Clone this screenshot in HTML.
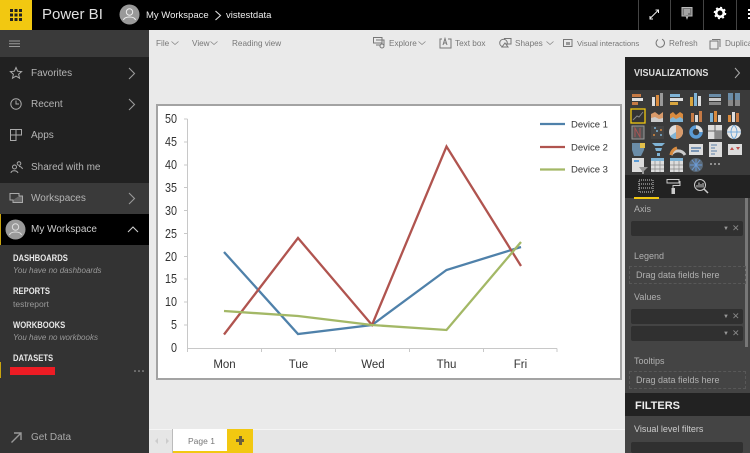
<!DOCTYPE html>
<html><head><meta charset="utf-8"><style>
*{box-sizing:border-box}
html,body{margin:0;padding:0}
html{background:#eaeaea}
body{width:750px;height:453px;position:relative;overflow:hidden;background:#eaeaea;font-family:"Liberation Sans",sans-serif;filter:blur(.3px)}
.a{position:absolute;white-space:nowrap}
.nav{font-size:10px;color:#b4b4b4;left:31px}
.h{font-size:9px;font-weight:bold;color:#e8e8e8;left:13px;transform:scaleX(.85);transform-origin:left}
.s{font-size:8.5px;color:#999;left:13px}
.i{font-size:8px;font-style:italic}
.t{font-size:8.2px;color:#777}
.f{font-size:9px;color:#b0b0b0}
.w{position:absolute;left:631px;width:112px;height:15px;background:#303030;border-radius:2px}
.d{position:absolute;left:629px;width:117px;height:18px;border:1px dashed #585858}
.sep{position:absolute;top:0;width:1px;height:30px;background:#444}
</style></head><body>
<!-- top bar -->
<div class="a" style="left:0;top:0;width:750px;height:30px;background:#000"></div>
<div class="a" style="left:0;top:0;width:32px;height:30px;background:#f2c811"></div>
<svg class="a" style="left:9px;top:8px" width="14" height="14"><g fill="#222"><rect x="1" y="1" width="3" height="3"/><rect x="5.500" y="1" width="3" height="3"/><rect x="10" y="1" width="3" height="3"/><rect x="1" y="5.500" width="3" height="3"/><rect x="5.500" y="5.500" width="3" height="3"/><rect x="10" y="5.500" width="3" height="3"/><rect x="1" y="10" width="3" height="3"/><rect x="5.500" y="10" width="3" height="3"/><rect x="10" y="10" width="3" height="3"/></g></svg>
<div class="a" style="left:42px;top:6px;font-size:15px;color:#e0e0e0">Power BI</div>
<svg class="a" style="left:119px;top:4px" width="21" height="21"><circle cx="10.500" cy="10.500" r="10" fill="#999"/><circle cx="10.500" cy="8" r="3.200" fill="none" stroke="#eee"/><path d="M4.500 16c1-4 11-4 12 0" fill="none" stroke="#eee"/></svg>
<div class="a" style="left:146px;top:10px;font-size:9.5px;color:#eee">My Workspace</div>
<svg class="a" style="left:214px;top:10px" width="8" height="11"><path d="M1.500 1l5 4.500-5 4.500" fill="none" stroke="#ddd" stroke-width="1.100"/></svg>
<div class="a" style="left:226px;top:10px;font-size:9.5px;color:#eee">vistestdata</div>
<div class="sep" style="left:638px"></div><div class="sep" style="left:670px"></div><div class="sep" style="left:703px"></div><div class="sep" style="left:736px"></div>
<svg class="a" style="left:648px;top:8px" width="12" height="12"><path d="M2 10.500L10 2.500M7.500 2H10.500V5M2 8V11H5" fill="none" stroke="#eee" stroke-width="1"/></svg>
<svg class="a" style="left:680px;top:6px" width="14" height="14"><path d="M2 1.500H12V10H8L7 12.500 6 10H2Z" fill="#777" stroke="#bbb"/><path d="M4 4H10M4 6H10M4 8H8" stroke="#eee" stroke-width=".8"/></svg>
<svg class="a" style="left:713px;top:6px" width="14" height="14"><circle cx="7" cy="7" r="3.800" fill="none" stroke="#fff" stroke-width="2.600"/><circle cx="7" cy="7" r="5.500" fill="none" stroke="#fff" stroke-width="1.600" stroke-dasharray="2 2.300"/></svg>
<div class="a" style="left:748px;top:9px;width:2px;height:10px;border-left:2px dotted #fff"></div>

<!-- sidebar -->
<div class="a" style="left:0;top:30px;width:149px;height:423px;background:#333"></div>
<div class="a" style="left:0;top:30px;width:149px;height:27px;background:#3a3a3a"></div>
<div class="a" style="left:0;top:57px;width:149px;height:126px;background:#212121"></div>
<div class="a" style="left:0;top:183px;width:149px;height:31px;background:#3a3a3a"></div>
<div class="a" style="left:0;top:214px;width:149px;height:31px;background:#000;border-left:1px solid #c9a50f"></div>
<div class="a" style="left:0;top:362px;width:1px;height:16px;background:#c9a50f"></div>
<svg class="a" style="left:9px;top:40px" width="12" height="8"><path d="M0 1H11M0 3.800H11M0 6.500H11" stroke="#999"/></svg>
<svg class="a" style="left:9px;top:66px" width="14" height="14"><path d="M7 1.500l1.600 3.700 4 .4-3 2.600.9 4-3.500-2.100-3.500 2.100.9-4-3-2.600 4-.4z" fill="none" stroke="#aaa"/></svg>
<div class="a nav" style="top:68px">Favorites</div>
<svg class="a" style="left:128px;top:67px" width="8" height="13"><path d="M1 1l5.500 5.500L1 12" fill="none" stroke="#999" stroke-width="1.100"/></svg>
<svg class="a" style="left:9px;top:97px" width="14" height="14"><circle cx="7" cy="7" r="5.200" fill="none" stroke="#aaa"/><path d="M7 3.500V7H10" fill="none" stroke="#aaa"/></svg>
<div class="a nav" style="top:99px">Recent</div>
<svg class="a" style="left:128px;top:98px" width="8" height="13"><path d="M1 1l5.500 5.500L1 12" fill="none" stroke="#999" stroke-width="1.100"/></svg>
<svg class="a" style="left:9px;top:128px" width="14" height="14"><path d="M1.500 1.500H7V7H1.500ZM7 1.500H12.500V7H7M1.500 7V12.500H7V7" fill="none" stroke="#aaa"/></svg>
<div class="a nav" style="top:130px">Apps</div>
<svg class="a" style="left:9px;top:160px" width="15" height="14"><circle cx="5.500" cy="7" r="2" fill="none" stroke="#aaa"/><path d="M2 13c0-3 6-3 7 0" fill="none" stroke="#aaa"/><circle cx="10" cy="3.500" r="1.800" fill="none" stroke="#aaa"/><path d="M10 6.500c2 0 3 1 3.500 2.500" fill="none" stroke="#aaa"/></svg>
<div class="a nav" style="top:162px">Shared with me</div>
<svg class="a" style="left:9px;top:191px" width="15" height="14"><path d="M1 2.500H10V9H1Z" fill="none" stroke="#aaa"/><path d="M4 9V11.500H13.500V5H10" fill="#666" stroke="#aaa"/></svg>
<div class="a nav" style="top:193px">Workspaces</div>
<svg class="a" style="left:128px;top:192px" width="8" height="13"><path d="M1 1l5.500 5.500L1 12" fill="none" stroke="#999" stroke-width="1.100"/></svg>
<svg class="a" style="left:5px;top:219px" width="21" height="21"><circle cx="10.500" cy="10.500" r="10" fill="#999"/><circle cx="10.500" cy="8" r="3.200" fill="none" stroke="#ddd"/><path d="M4.500 16c1-4 11-4 12 0" fill="none" stroke="#ddd"/></svg>
<div class="a nav" style="top:224px;color:#ccc">My Workspace</div>
<svg class="a" style="left:127px;top:225px" width="12" height="8"><path d="M1 7l5-5 5 5" fill="none" stroke="#ccc" stroke-width="1.100"/></svg>
<div class="a h" style="top:253px">DASHBOARDS</div>
<div class="a s i" style="top:266px">You have no dashboards</div>
<div class="a h" style="top:286px">REPORTS</div>
<div class="a s" style="top:299px">testreport</div>
<div class="a h" style="top:320px">WORKBOOKS</div>
<div class="a s i" style="top:333px">You have no workbooks</div>
<div class="a h" style="top:353px">DATASETS</div>
<div class="a" style="left:10px;top:367px;width:45px;height:8px;background:#ed1c24"></div>
<svg class="a" style="left:133px;top:369px" width="12" height="4"><g fill="#aaa"><circle cx="2" cy="2" r=".8"/><circle cx="6" cy="2" r=".8"/><circle cx="10" cy="2" r=".8"/></g></svg>
<svg class="a" style="left:10px;top:431px" width="13" height="13"><path d="M1.500 11.500L11 2M4 2H11V9" fill="none" stroke="#999" stroke-width="1.400"/></svg>
<div class="a nav" style="top:432px;color:#a8a8a8">Get Data</div>

<!-- toolbar -->
<div class="a t" style="left:156px;top:39px">File</div>
<svg class="a" style="left:171px;top:41px" width="8" height="5"><path d="M.5 .5l3.500 3 3.500-3" fill="none" stroke="#888" stroke-width=".8"/></svg>
<div class="a t" style="left:192px;top:39px">View</div>
<svg class="a" style="left:210px;top:41px" width="8" height="5"><path d="M.5 .5l3.500 3 3.500-3" fill="none" stroke="#888" stroke-width=".8"/></svg>
<div class="a t" style="left:232px;top:39px">Reading view</div>
<svg class="a" style="left:373px;top:37px" width="13" height="12"><path d="M.5 .5H9V6H.5ZM3 3H11V8H3" fill="none" stroke="#777"/><circle cx="9" cy="9" r="2" fill="#eaeaea" stroke="#777"/></svg>
<div class="a t" style="left:389px;top:39px">Explore</div>
<svg class="a" style="left:418px;top:41px" width="8" height="5"><path d="M.5 .5l3.500 3 3.500-3" fill="none" stroke="#888" stroke-width=".8"/></svg>
<svg class="a" style="left:439px;top:37px" width="13" height="12"><path d="M3 2H1V11H12V2H9" fill="none" stroke="#777"/><path d="M4 8L6 1.500 8 8M4.800 6H7.200" fill="none" stroke="#777"/></svg>
<div class="a t" style="left:455px;top:39px">Text box</div>
<svg class="a" style="left:499px;top:37px" width="13" height="12"><circle cx="4.500" cy="6" r="3.800" fill="none" stroke="#777"/><path d="M5 1.500H12V7H7" fill="none" stroke="#777"/><path d="M6 6l3 4H3z" fill="#eaeaea" stroke="#777"/></svg>
<div class="a t" style="left:515px;top:39px">Shapes</div>
<svg class="a" style="left:546px;top:41px" width="8" height="5"><path d="M.5 .5l3.500 3 3.500-3" fill="none" stroke="#888" stroke-width=".8"/></svg>
<svg class="a" style="left:563px;top:38px" width="10" height="10"><path d="M.5 1.500H9V8.500H.5Z" fill="none" stroke="#777"/><path d="M3 4H7V7H3Z" fill="#999"/></svg>
<div class="a t" style="left:577px;top:39px;font-size:7.700px">Visual interactions</div>
<svg class="a" style="left:655px;top:37px" width="11" height="12"><path d="M3 2.500A4.200 4.200 0 1 0 7 2.200" fill="none" stroke="#777"/></svg>
<div class="a t" style="left:669px;top:39px">Refresh</div>
<svg class="a" style="left:709px;top:37px" width="13" height="13"><path d="M3 2.500H11V10" fill="none" stroke="#777"/><path d="M1 4H9V12H1Z" fill="none" stroke="#777"/></svg>
<div class="a t" style="left:725px;top:39px">Duplicate</div>

<!-- canvas -->
<div class="a" style="left:156px;top:104px;width:466px;height:276px;background:#fff;border:2px solid #a3a3a3"></div>
<svg class="a" style="left:156px;top:104px" width="466" height="276" viewBox="156 104 466 276">
<g stroke="#c8c8c8" fill="none"><path d="M187.500 119V348.500H557M184 119H187.500M184 142H187.500M184 165H187.500M184 187.500H187.500M184 210.500H187.500M184 233.500H187.500M184 256.500H187.500M184 279H187.500M184 302H187.500M184 325H187.500M261.500 348.500V352M335.500 348.500V352M409.500 348.500V352M483.500 348.500V352M557 348.500V352M187.500 348.500V352"/></g>
<g font-family="Liberation Sans" font-size="12.500" fill="#333">
<text x="165" y="123" textLength="12" lengthAdjust="spacingAndGlyphs">50</text><text x="165" y="146" textLength="12" lengthAdjust="spacingAndGlyphs">45</text><text x="165" y="169" textLength="12" lengthAdjust="spacingAndGlyphs">40</text><text x="165" y="192" textLength="12" lengthAdjust="spacingAndGlyphs">35</text><text x="165" y="215" textLength="12" lengthAdjust="spacingAndGlyphs">30</text><text x="165" y="238" textLength="12" lengthAdjust="spacingAndGlyphs">25</text><text x="165" y="261" textLength="12" lengthAdjust="spacingAndGlyphs">20</text><text x="165" y="283" textLength="12" lengthAdjust="spacingAndGlyphs">15</text><text x="165" y="306" textLength="12" lengthAdjust="spacingAndGlyphs">10</text><text x="171" y="329" textLength="6" lengthAdjust="spacingAndGlyphs">5</text><text x="171" y="352" textLength="6" lengthAdjust="spacingAndGlyphs">0</text></g>
<g font-family="Liberation Sans" font-size="11.500" fill="#333" text-anchor="middle">
<text x="224.500" y="368">Mon</text><text x="298.500" y="368">Tue</text><text x="373" y="368">Wed</text><text x="446.500" y="368">Thu</text><text x="520.500" y="368">Fri</text></g>
<g fill="none" stroke-width="2.300">
<path d="M224 252L298 334 372 325 446.500 270 521 247" stroke="#4f81aa"/>
<path d="M224 334.500L298 238 372 325 446.500 146.500 521 266" stroke="#b0544f"/>
<path d="M224 311L298 316 372 325 446.500 330 521 242" stroke="#a3b866"/>
<path d="M540 124H565" stroke="#4f81aa"/><path d="M540 147H565" stroke="#b0544f"/><path d="M540 169.500H565" stroke="#a3b866"/></g>
<g font-family="Liberation Sans" font-size="9.500" fill="#333"><text x="571" y="127.500">Device 1</text><text x="571" y="150.500">Device 2</text><text x="571" y="172.500">Device 3</text></g>
</svg>

<!-- bottom bar -->
<div class="a" style="left:149px;top:429px;width:476px;height:1px;background:#f5f5f5"></div>
<div class="a" style="left:149px;top:430px;width:476px;height:23px;background:#e6e6e6"></div>
<svg class="a" style="left:153px;top:437px" width="18" height="8"><path d="M5 1L2 4l3 3ZM13 1l3 3-3 3Z" fill="#ccc"/></svg>
<div class="a" style="left:172px;top:429px;width:1px;height:24px;background:#bbb"></div>
<div class="a" style="left:173px;top:429px;width:54px;height:24px;background:#fff;border-bottom:2px solid #f2c811"></div>
<div class="a" style="left:188px;top:436px;font-size:8.500px;color:#777">Page 1</div>
<div class="a" style="left:227px;top:429px;width:26px;height:24px;background:#f2c811"></div>
<div class="a" style="left:236px;top:439px;width:8px;height:3px;background:#6b5f3a"></div>
<div class="a" style="left:238.500px;top:436px;width:3px;height:9px;background:#6b5f3a"></div>

<!-- right panel -->
<div class="a" style="left:625px;top:57px;width:125px;height:396px;background:#444"></div>
<div class="a" style="left:625px;top:57px;width:125px;height:33px;background:#222"></div>
<div class="a" style="left:625px;top:90px;width:125px;height:85px;background:#3a3a3a"></div>
<div class="a" style="left:625px;top:175px;width:125px;height:23px;background:#222"></div>
<div class="a" style="left:634px;top:68px;font-size:10px;font-weight:bold;color:#ddd;transform:scaleX(.9);transform-origin:left">VISUALIZATIONS</div>
<svg class="a" style="left:734px;top:67px" width="7" height="12"><path d="M1 1l4.500 5L1 11" fill="none" stroke="#aaa"/></svg>
<svg class="a" style="left:625px;top:90px" width="125" height="85">
<g fill="#c67a45"><rect x="7" y="4" width="9" height="3"/><rect x="7" y="12" width="6" height="3"/></g><g fill="#e3e3e3"><rect x="7" y="8" width="11" height="3"/></g>
<rect x="27" y="7" width="3" height="9" fill="#ddd"/><rect x="31" y="5" width="3" height="11" fill="#d88a3e"/><rect x="35" y="3" width="3" height="13" fill="#999"/>
<rect x="45" y="4" width="10" height="3" fill="#7fb3d5"/><rect x="45" y="8" width="13" height="3" fill="#ddd"/><rect x="45" y="12" width="8" height="3" fill="#d8a53e"/>
<rect x="65" y="7" width="3" height="9" fill="#d8a53e"/><rect x="69" y="3" width="3" height="13" fill="#7fb3d5"/><rect x="73" y="6" width="3" height="10" fill="#ddd"/>
<rect x="84" y="4" width="12" height="3" fill="#6b8da8"/><rect x="84" y="8" width="12" height="3" fill="#ccc"/><rect x="84" y="12" width="12" height="3" fill="#888"/>
<rect x="103" y="3" width="5" height="13" fill="#6b8da8"/><rect x="110" y="3" width="5" height="13" fill="#6b8da8"/><rect x="103" y="10" width="5" height="6" fill="#888"/><rect x="110" y="10" width="5" height="6" fill="#888"/>
<rect x="6" y="19" width="14" height="14" fill="#333" stroke="#f2c811" stroke-width="1.300"/><path d="M8 30l4-4 2 1 4-5" fill="none" stroke="#888"/>
<path d="M26 32V24l4-2 4 3 4-3V32Z" fill="#d89a6a"/><path d="M26 32V28l4-1 4 2 4-1V32Z" fill="#ccc"/>
<path d="M45 32V24l3-2 3 3 4-3 3 2V32Z" fill="#d88a3e"/><path d="M45 29l3-2 3 2 4-2 3 2V32H45Z" fill="#7fb3d5"/>
<rect x="66" y="23" width="3" height="9" fill="#c67a45"/><rect x="70" y="25" width="3" height="7" fill="#ddd"/><rect x="74" y="21" width="3" height="11" fill="#c67a45"/>
<rect x="85" y="23" width="3" height="9" fill="#7fb3d5"/><rect x="89" y="21" width="3" height="11" fill="#d88a3e"/><rect x="93" y="25" width="3" height="7" fill="#ddd"/>
<rect x="103" y="25" width="3" height="7" fill="#d88a3e"/><rect x="107" y="22" width="3" height="10" fill="#ddd"/><rect x="111" y="23" width="3" height="9" fill="#c67a45"/>
<rect x="7" y="36" width="12" height="13" fill="#555" stroke="#999"/><path d="M10 47V38l5 9V38" fill="none" stroke="#a55"/>
<rect x="26" y="36" width="13" height="13" fill="#444"/><g fill="#d88a3e"><circle cx="29" cy="45" r="1"/><circle cx="36" cy="40" r="1"/></g><g fill="#7fb3d5"><circle cx="32" cy="41" r="1"/><circle cx="36" cy="45" r="1"/><circle cx="30" cy="38" r="1"/></g>
<circle cx="51" cy="42" r="7" fill="#ddd"/><path d="M51 42V35a7 7 0 0 1 0 14Z" fill="#d89a6a"/><path d="M51 42L45 46a7 7 0 0 0 6 3Z" fill="#7fb3d5"/>
<circle cx="71" cy="42" r="5" fill="none" stroke="#5b9bd5" stroke-width="3.500"/><path d="M71 37a5 5 0 0 1 5 5" fill="none" stroke="#ddd" stroke-width="3.500"/>
<rect x="83" y="35" width="14" height="14" fill="#ddd"/><path d="M83 41H97M90 35V49" stroke="#666"/><rect x="90" y="41" width="7" height="8" fill="#888"/>
<circle cx="109" cy="42" r="7" fill="#e8e8e8"/><path d="M102 42H116M109 35C105 39 105 45 109 49M109 35C113 39 113 45 109 49" fill="none" stroke="#5b9bd5" stroke-width=".8"/>
<path d="M7 53H20L19 60 16 66H9L7 60Z" fill="#6b8da8"/><path d="M15 53H20V58H15Z" fill="#e3c04b"/>
<path d="M27 53H40L37 56H30ZM30 58H37L36 61H31ZM32 63H35V66H32Z" fill="#7fb3d5"/>
<path d="M46 65A8 8 0 0 1 60 65" fill="none" stroke="#ccc" stroke-width="3"/><path d="M46 65A8 8 0 0 1 52 58" fill="none" stroke="#d88a3e" stroke-width="3"/>
<rect x="64" y="54" width="14" height="11" fill="#ddd"/><path d="M66 58H76M66 61H74" stroke="#5b7fa8" stroke-width="1.500"/>
<rect x="84" y="52" width="13" height="15" fill="#ddd"/><path d="M86 55H92M86 58H90M86 61H92M86 64H90" stroke="#5b7fa8"/>
<rect x="103" y="54" width="14" height="11" fill="#ddd"/><path d="M105 60l2-3 2 3ZM111 57l2 3 2-3Z" fill="#c0504d"/>
<rect x="7" y="68" width="12" height="14" fill="#ddd"/><rect x="9" y="70" width="5" height="2" fill="#5b9bd5"/><path d="M14 77H23L19 81V84H17V81Z" fill="#999"/>
<rect x="26" y="68" width="13" height="14" fill="#ddd"/><rect x="26" y="68" width="13" height="3" fill="#7fb3d5"/><path d="M26 75H39M26 79H39M30 71V82M35 71V82" stroke="#888" stroke-width=".7"/>
<rect x="45" y="68" width="13" height="14" fill="#ddd"/><rect x="45" y="68" width="13" height="3" fill="#7fb3d5"/><path d="M45 75H58M45 79H58M49 71V82M54 71V82" stroke="#888" stroke-width=".7"/>
<circle cx="71" cy="75" r="7" fill="#5a6a7a"/><path d="M65 75H77M71 69V81M67 70L75 80M75 70L67 80" stroke="#6b9bd5"/>
<circle cx="86" cy="74" r=".9" fill="#ccc"/><circle cx="90" cy="74" r=".9" fill="#ccc"/><circle cx="94" cy="74" r=".9" fill="#ccc"/>
</svg>
<!-- tabs -->
<svg class="a" style="left:638px;top:177px" width="16" height="17"><rect x="1" y="3" width="14" height="12" fill="none" stroke="#ccc" stroke-dasharray="1 1"/><path d="M1 7H15M1 11H15" stroke="#ccc" stroke-dasharray="1 1"/></svg>
<div class="a" style="left:634px;top:197px;width:25px;height:2px;background:#f2c811"></div>
<svg class="a" style="left:666px;top:178px" width="15" height="17"><path d="M1 1.500H13V5H1ZM13 3.500H14V7.500H7V10" fill="none" stroke="#ccc"/><rect x="5.500" y="10" width="3.500" height="6" fill="#ccc"/></svg>
<svg class="a" style="left:693px;top:178px" width="16" height="16"><circle cx="7" cy="7" r="5.500" fill="none" stroke="#ccc"/><path d="M4 9.500V7M6 9.500V4.500M8 9.500V6M10 9.500V5" stroke="#ccc"/><path d="M11 11L15 15" stroke="#ccc" stroke-width="1.500"/></svg>
<!-- fields -->
<div class="a" style="left:745px;top:198px;width:3px;height:149px;background:#777"></div>
<div class="a f" style="left:634px;top:204px">Axis</div>
<div class="w" style="top:221px"></div>
<div class="a" style="left:723px;top:226px;font-size:6px;color:#999">▼</div><div class="a" style="left:732px;top:223px;font-size:9px;color:#888">✕</div>
<div class="a f" style="left:634px;top:251px">Legend</div>
<div class="d" style="top:266px"></div>
<div class="a f" style="left:636px;top:270px">Drag data fields here</div>
<div class="a f" style="left:634px;top:292px">Values</div>
<div class="w" style="top:309px"></div>
<div class="a" style="left:723px;top:314px;font-size:6px;color:#999">▼</div><div class="a" style="left:732px;top:311px;font-size:9px;color:#888">✕</div>
<div class="w" style="top:326px"></div>
<div class="a" style="left:723px;top:331px;font-size:6px;color:#999">▼</div><div class="a" style="left:732px;top:328px;font-size:9px;color:#888">✕</div>
<div class="a f" style="left:634px;top:356px">Tooltips</div>
<div class="d" style="top:371px"></div>
<div class="a f" style="left:636px;top:375px">Drag data fields here</div>
<div class="a" style="left:625px;top:393px;width:125px;height:23px;background:#222"></div>
<div class="a" style="left:635px;top:400px;font-size:11px;font-weight:bold;color:#eee">FILTERS</div>
<div class="a f" style="left:634px;top:424px;color:#ccc">Visual level filters</div>
<div class="a" style="left:631px;top:442px;width:112px;height:11px;background:#303030;border-radius:2px"></div>
</body></html>
